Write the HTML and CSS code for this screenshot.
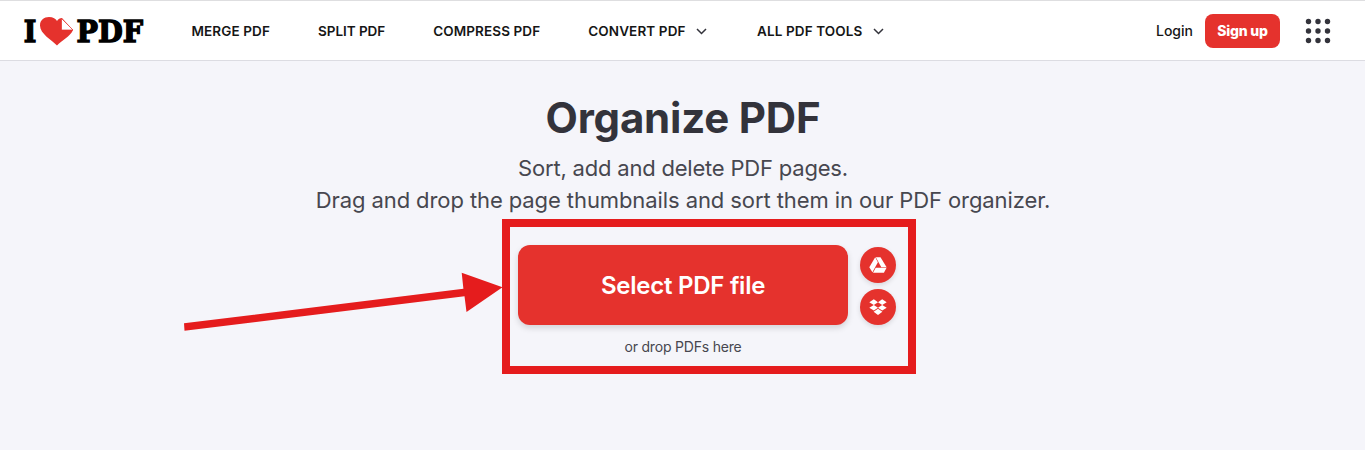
FILE: index.html
```
<!DOCTYPE html>
<html lang="en">
<head>
    <meta charset="UTF-8">
    <title>Organize PDF</title>
    <link rel="stylesheet" href="styles.css">
</head>
<body>
    <header class="header">
        <a class="logo" href="#">
            <svg width="124" height="44" viewBox="-2 -7 124 44">
                <text class="logo-text" x="-0.300" y="26.300" textLength="12.600" lengthAdjust="spacingAndGlyphs">I</text>
                <path fill="#e5322d" d="M33 29.500C28 24 16 18 16 9.500C16 4 20 1 25 1C29 1 32 3 33 5C34 3 36 2 38 2L49 14C46 21 38 24 33 29.500Z"/>
                <path fill="#fff" stroke="#e5322d" stroke-width="0.700" d="M37.500 2.500V14H49Z"/>
                <text class="logo-text" x="52.500" y="26.300" textLength="66.500" lengthAdjust="spacingAndGlyphs">PDF</text>
            </svg>
        </a>
        <nav class="menu">
            <a href="#">MERGE PDF</a>
            <a class="split" href="#">SPLIT PDF</a>
            <a href="#">COMPRESS PDF</a>
            <a href="#">CONVERT PDF
                <svg class="chevron" width="11" height="7" viewBox="0 0 11 7"><path d="M1 1L5.500 5.500L10 1"/></svg>
            </a>
            <a class="all" href="#">ALL PDF TOOLS
                <svg class="chevron" width="11" height="7" viewBox="0 0 11 7"><path d="M1 1L5.500 5.500L10 1"/></svg>
            </a>
        </nav>
        <div class="actions">
            <a class="login" href="#">Login</a>
            <a class="signup" href="#">Sign up</a>
            <svg class="grid" width="26" height="26" viewBox="0 0 26 26" fill="#33333b">
                <circle cx="3.500" cy="3.500" r="2.700"/><circle cx="13" cy="3.500" r="2.700"/><circle cx="22.500" cy="3.500" r="2.700"/>
                <circle cx="3.500" cy="13" r="2.700"/><circle cx="13" cy="13" r="2.700"/><circle cx="22.500" cy="13" r="2.700"/>
                <circle cx="3.500" cy="22.500" r="2.700"/><circle cx="13" cy="22.500" r="2.700"/><circle cx="22.500" cy="22.500" r="2.700"/>
            </svg>
        </div>
    </header>

    <main class="tool">
        <h1 class="title">Organize PDF</h1>
        <p class="subtitle sub-1">Sort, add and delete PDF pages.</p>
        <p class="subtitle">Drag and drop the page thumbnails and sort them in our PDF organizer.</p>
        <div class="uploader">
            <button class="select" type="button">Select PDF file</button>
            <div class="clouds">
                <a class="cloud" href="#">
                    <svg width="18" height="16" viewBox="0 0 18 16" fill="#fff">
                        <path d="M6.200 0.300L8.900 5.200L3.400 15.300L0.300 10.200Z"/>
                        <path d="M6.800 0.300H11.500L17.600 10.200H12.300Z"/>
                        <path d="M6.700 10.800H17.600L14.900 15.700H4Z"/>
                    </svg>
                </a>
                <a class="cloud" href="#">
                    <svg width="18" height="17" viewBox="0 0 18 17" fill="#fff">
                        <path d="M4.800 0.300L9 3.200L4.800 5.900L0.300 3.200Z"/>
                        <path d="M13.200 0.300L17.700 3.200L13.200 5.900L9 3.200Z"/>
                        <path d="M4.800 5.900L9 8.700L4.800 11.600L0.300 8.700Z"/>
                        <path d="M13.200 5.900L17.700 8.700L13.200 11.600L9 8.700Z"/>
                        <path d="M9 9.700L13.400 12.700L9 16L4.600 12.700Z"/>
                    </svg>
                </a>
            </div>
        </div>
        <p class="drop">or drop PDFs here</p>
        <!-- callout over the upload area -->
        <div class="mark"></div>
        <svg class="arrow" width="330" height="70" viewBox="0 0 330 70" fill="#e51c1d">
            <path d="M4 53.300L283.400 18.800L281.700 2.800L322.500 17.300L286.500 42L284.500 26.300L4.500 60.800Z"/>
        </svg>
    </main>
</body>
</html>
```
FILE: styles.css
```
*{
    margin: 0;
    padding: 0;
    box-sizing: border-box;
}

body{
    font-family: Inter, "Liberation Sans", sans-serif;
    background-color: #f5f5fa;
    overflow: hidden;
}

a{
    color: #161616;
    text-decoration: none;
}

.header{
    display: flex;
    align-items: center;
    height: 61px;
    padding: 0 34px 0 22px;
    background-color: #fff;
    border-top: 1px solid #dedee0;
    border-bottom: 1px solid #dcdce2;
}

.logo{
    width: 124px;
    height: 44px;
}

.logo svg{
    display: block;
}

.logo-text{
    font: bold 30px "DejaVu Serif", serif;
    stroke: #000;
    stroke-width: 1.4;
}

.menu{
    display: flex;
    gap: 48px;
    margin-left: 45.5px;
    font-size: 13.5px;
    font-weight: 600;
    letter-spacing: 0.11px;
    white-space: nowrap;
}

.menu a{
    display: flex;
    align-items: center;
    gap: 10.5px;
}

.menu .split{
    letter-spacing: -0.05px;
}

.menu .all{
    margin-left: 2px;
}

.chevron{
    margin-top: 1px;
    fill: none;
    stroke: #33333b;
    stroke-width: 1.5;
}

.actions{
    display: flex;
    align-items: center;
    margin-left: auto;
    font-size: 14px;
    font-weight: 500;
}

.signup{
    width: 75px;
    height: 34px;
    margin: 0 25px 0 12px;
    line-height: 34px;
    text-align: center;
    font-weight: 800;
    letter-spacing: -0.2px;
    color: #fff;
    background-color: #e5322d;
    border-radius: 8px;
}

.tool{
    position: relative;
    height: 389px;
    padding-top: 31px;
    text-align: center;
}

.title{
    padding-left: 1px;
    font-size: 42px;
    line-height: 52px;
    font-weight: 700;
    letter-spacing: -0.2px;
    color: #33333b;
}

.subtitle{
    padding-left: 1px;
    font-size: 22px;
    line-height: 32px;
    letter-spacing: -0.09px;
    color: #47474f;
    white-space: nowrap;
}

.sub-1{
    margin-top: 8px;
    letter-spacing: -0.2px;
}

.uploader{
    display: flex;
    gap: 12px;
    margin: 29px 0 0 518px;
}

.select{
    width: 330px;
    height: 80px;
    border: 0;
    border-radius: 12px;
    font: 600 24px Inter, sans-serif;
    letter-spacing: -0.25px;
    color: #fff;
    background-color: #e5322d;
    box-shadow: 0 3px 6px rgba(0,0,0,0.14);
}

.clouds{
    display: flex;
    flex-direction: column;
    gap: 6px;
    padding-top: 2px;
}

.cloud{
    display: flex;
    align-items: center;
    justify-content: center;
    width: 36px;
    height: 36px;
    border-radius: 50%;
    background-color: #e5322d;
    box-shadow: 0 2px 5px rgba(0,0,0,0.12);
}

.drop{
    margin-top: 12px;
    padding-left: 1px;
    font-size: 14px;
    line-height: 20px;
    letter-spacing: -0.2px;
    color: #47474f;
}

.mark{
    position: absolute;
    left: 502px;
    top: 158px;
    width: 414px;
    height: 155px;
    border: 8px solid #e51c1d;
}

.arrow{
    position: absolute;
    left: 180px;
    top: 209px;
}
```
